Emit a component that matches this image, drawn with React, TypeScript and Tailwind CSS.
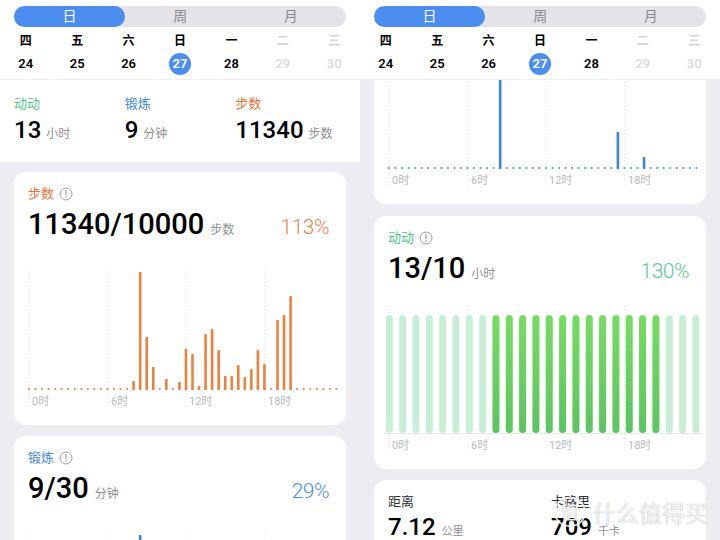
import { FC } from "react";

const WEEK = ["四", "五", "六", "日", "一", "二", "三"];
const DATES = ["24", "25", "26", "27", "28", "29", "30"];

// 48 half-hour slots
const STEPS: Record<number, number> = {
  16: 8, 17: 117, 18: 52, 19: 22, 21: 10, 23: 7, 24: 40, 25: 35, 26: 3, 27: 55,
  28: 60, 29: 39, 30: 13, 31: 13, 32: 24, 33: 12, 34: 20, 35: 39, 36: 25,
  38: 69, 39: 74, 40: 93,
};
const WORKOUT: Record<number, number> = { 17: 118, 35: 36, 39: 11 };

const GRID_X = [15, 94, 172, 251];
const HOURS = ["0时", "6时", "12时", "18时"];

const InfoIcon = () => (
  <svg width="14" height="14" viewBox="0 0 14 14">
    <circle cx="7" cy="7" r="6" fill="none" stroke="#9a9a9a" strokeWidth="1" />
    <path d="M7 3.7v4" stroke="#9a9a9a" strokeWidth="1.3" strokeLinecap="round" />
    <circle cx="7" cy="10.1" r="0.8" fill="#9a9a9a" />
  </svg>
);

const Header = () => (
  <div className="shrink-0 border-b border-[#ededed] bg-white pb-[4px]">
    <div className="mx-[14px] mt-[6px] flex h-[21px] rounded-full bg-[#e3e3e8] text-[14px] leading-[21px]">
      <div className="w-[111px] rounded-full bg-[#4b8ef0] text-center text-white">日</div>
      <div className="flex-1 text-center text-[#8a8a8e]">周</div>
      <div className="flex-1 text-center text-[#8a8a8e]">月</div>
    </div>
    <div className="mt-[4px] grid h-5 grid-cols-7 text-center text-[12px] font-bold leading-5">
      {WEEK.map((d, i) => (
        <span key={i} className={i > 4 ? "text-[#d4d4d8]" : "text-black"}>
          {d}
        </span>
      ))}
    </div>
    <div className="mt-[2px] grid h-[22px] grid-cols-7 text-[13px] font-semibold">
      {DATES.map((d, i) => (
        <div key={d} className="flex items-center justify-center">
          {i === 3 ? (
            <span className="flex h-[22px] w-[22px] items-center justify-center rounded-full bg-[#4b8ef0] text-white">
              {d}
            </span>
          ) : (
            <span className={i > 4 ? "text-[#dadade]" : "text-black"}>{d}</span>
          )}
        </div>
      ))}
    </div>
  </div>
);

const Stat: FC<{ label: string; color: string; value: string; unit: string }> = ({
  label,
  color,
  value,
  unit,
}) => (
  <div>
    <div className={`h-5 text-[13px] leading-5 ${color}`}>{label}</div>
    <div className="mt-[1px] flex h-[30px] items-baseline leading-[30px]">
      <span className="text-[24px] font-medium text-black">{value}</span>
      <span className="ml-[5px] text-[12px] text-[#8e8e93]">{unit}</span>
    </div>
  </div>
);

const BarChart: FC<{ data: Record<number, number>; bar: string; dot: string }> = ({
  data,
  bar,
  dot,
}) => (
  <svg width="333" height="150" className="-ml-[14px] mt-[18px] block">
    {GRID_X.map((x) => (
      <line key={x} x1={x} x2={x} y1="8" y2="145" stroke="#dcdcdc" strokeWidth="1" strokeDasharray="1 2" />
    ))}
    {Array.from({ length: 48 }).map((_, i) => {
      const cx = 15 + i * 6.54;
      const h = data[i] ?? 0;
      return (
        <g key={i}>
          <circle cx={cx} cy="127" r="1.1" fill={dot} />
          {h > 0 && <rect x={cx - 1.3} y={127 - h} width="2.6" height={h + 1} rx="0.8" fill={bar} />}
        </g>
      );
    })}
    {HOURS.map((t, i) => (
      <text key={t} x={GRID_X[i] + 3} y="143" fontSize="11" fill="#b8b8bc">
        {t}
      </text>
    ))}
  </svg>
);

const ActiveChart = () => (
  <svg width="333" height="150" className="-ml-[14px] mt-[18px] block">
    <defs>
      <linearGradient id="act" x1="0" y1="0" x2="0" y2="1">
        <stop offset="0" stopColor="#76dc62" />
        <stop offset="1" stopColor="#5cc461" />
      </linearGradient>
    </defs>
    {GRID_X.map((x) => (
      <line key={x} x1={x} x2={x} y1="0" y2="145" stroke="#dcdcdc" strokeWidth="1" strokeDasharray="1 2" />
    ))}
    <line x1="10" x2="330" y1="127.5" y2="127.5" stroke="#e6e6e6" strokeWidth="1" />
    {Array.from({ length: 24 }).map((_, j) => {
      const cx = 15.3 + j * 13.33;
      const on = j >= 8 && j <= 20;
      return (
        <rect key={j} x={cx - 3.5} y="9" width="7" height="118" rx="3.5" fill={on ? "url(#act)" : "#c8eed8"} />
      );
    })}
    {HOURS.map((t, i) => (
      <text key={t} x={GRID_X[i] + 3} y="143" fontSize="11" fill="#b8b8bc">
        {t}
      </text>
    ))}
  </svg>
);

const Card: FC<{
  label: string;
  labelColor: string;
  value: string;
  unit: string;
  pct: string;
  pctColor: string;
  children: React.ReactNode;
  className?: string;
}> = ({ label, labelColor, value, unit, pct, pctColor, children, className }) => (
  <div className={`h-[253px] shrink-0 overflow-hidden rounded-[12px] bg-white px-[14px] pt-3 ${className ?? ""}`}>
    <div className={`flex h-5 items-center gap-[5px] text-[13px] leading-5 ${labelColor}`}>
      <span>{label}</span>
      <InfoIcon />
    </div>
    <div className="flex h-10 items-baseline leading-10">
      <span className="text-[29px] font-medium text-black">{value}</span>
      <span className="ml-[6px] text-[12px] text-[#8e8e93]">{unit}</span>
      <span className={`ml-auto pr-[3px] text-[21px] font-light tracking-[-0.5px] ${pctColor}`}>{pct}</span>
    </div>
    {children}
  </div>
);

export default function App() {
  return (
    <div className="flex h-[540px] w-[720px] overflow-hidden bg-[#ececf1] font-['Roboto','Noto_Sans_CJK_SC',sans-serif]">
      {/* left screen */}
      <div className="flex w-[360px] flex-col">
        <Header />
        <div className="grid h-[82px] shrink-0 grid-cols-3 bg-white px-[14px] pt-[14px]">
          <Stat label="动动" color="text-[#4fc587]" value="13" unit="小时" />
          <Stat label="锻炼" color="text-[#3e89d8]" value="9" unit="分钟" />
          <Stat label="步数" color="text-[#e5743a]" value="11340" unit="步数" />
        </div>
        <div className="flex shrink-0 flex-col px-[14px]">
          <Card
            className="mt-[10px]"
            label="步数"
            labelColor="text-[#e5743a]"
            value="11340/10000"
            unit="步数"
            pct="113%"
            pctColor="text-[#e8844f]"
          >
            <BarChart data={STEPS} bar="#e9823f" dot="#e9823f" />
          </Card>
          <Card
            className="mt-[11px]"
            label="锻炼"
            labelColor="text-[#3e89d8]"
            value="9/30"
            unit="分钟"
            pct="29%"
            pctColor="text-[#4a90e2]"
          >
            <BarChart data={WORKOUT} bar="#3a86d3" dot="#4f9bd4" />
          </Card>
        </div>
      </div>

      {/* right screen, scrolled */}
      <div className="relative flex w-[360px] flex-col">
        <Header />
        <div className="flex-1 overflow-hidden">
          <div className="-mt-[129px] flex flex-col px-[14px]">
            <Card
              label="锻炼"
              labelColor="text-[#3e89d8]"
              value="9/30"
              unit="分钟"
              pct="29%"
              pctColor="text-[#4a90e2]"
            >
              <BarChart data={WORKOUT} bar="#3a86d3" dot="#4f9bd4" />
            </Card>
            <Card
              className="mt-[12px]"
              label="动动"
              labelColor="text-[#4fc587]"
              value="13/10"
              unit="小时"
              pct="130%"
              pctColor="text-[#5bca8f]"
            >
              <ActiveChart />
            </Card>
            <div className="mt-[11px] flex h-[253px] shrink-0 rounded-[12px] bg-white px-[14px] pt-3">
              <div className="w-[163px]">
                <div className="h-5 text-[13px] leading-5 text-[#333]">距离</div>
                <div className="flex h-[30px] items-baseline leading-[30px]">
                  <span className="text-[24px] font-medium text-black">7.12</span>
                  <span className="ml-[6px] text-[11px] text-[#8e8e93]">公里</span>
                </div>
              </div>
              <div>
                <div className="h-5 text-[13px] leading-5 text-[#333]">卡路里</div>
                <div className="flex h-[30px] items-baseline leading-[30px]">
                  <span className="text-[24px] font-medium text-black">709</span>
                  <span className="ml-[6px] text-[11px] text-[#8e8e93]">千卡</span>
                </div>
              </div>
            </div>
          </div>
        </div>
        {/* site watermark */}
        <div className="absolute left-[194px] top-[497px] flex h-[30px] w-[32px] items-center justify-center rounded-full border-2 border-white/80 text-[18px] text-white/85 [text-shadow:0_0_1px_#999]">
          值
        </div>
        <div className="absolute left-[233px] top-[500px] text-[23px] leading-[30px] text-white/85 [text-shadow:0_0_1px_#999]">
          什么值得买
        </div>
      </div>
    </div>
  );
}
